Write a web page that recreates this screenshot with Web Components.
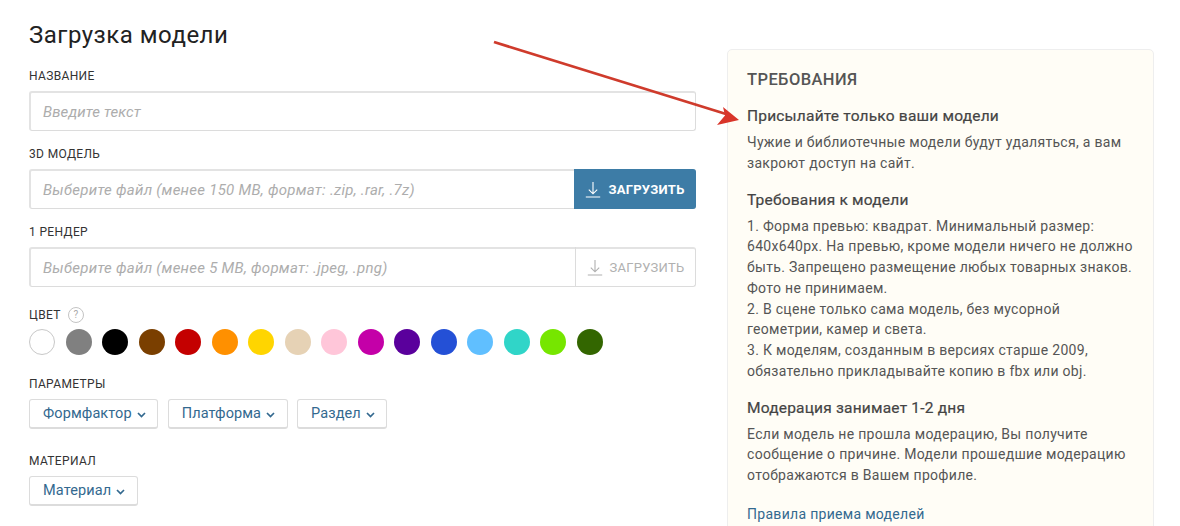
<!DOCTYPE html>
<html lang="ru">
<head>
<meta charset="utf-8">
<style>
html,body{margin:0;padding:0;height:526px;overflow:hidden;background:#fff;font-family:Roboto,"Liberation Sans",sans-serif}
</style>
</head>
<body>
<upload-page>
  <upload-form slot="left"></upload-form>
  <req-panel slot="right"></req-panel>
</upload-page>
<script>
const downIcon = `<svg width="16" height="17" viewBox="0 0 16 17" fill="none" stroke="currentColor" stroke-width="1.1"><path d="M8 1v11.5M3.8 8.6 8 12.8l4.2-4.2M.8 16h14.4"/></svg>`

class UploadPage extends HTMLElement {
  constructor() {
    super()
    this.attachShadow({ mode: 'open' })
    this.shadowRoot.innerHTML = `
    <style>
    :host {display:flex;position:relative;height:526px;overflow:hidden;padding:0 26px 0 29px;box-sizing:border-box;gap:31px}
    .l {display:block;width:667px;flex:none}
    .r {display:block;width:427px;flex:none;padding-top:49px}
    svg {position:absolute;left:0;top:0;pointer-events:none}
    </style>
    <div class="l"><slot name="left"></slot></div>
    <div class="r"><slot name="right"></slot></div>
    <svg width="1180" height="526"><path d="M494 42 726 114" stroke="#cf3b2c" stroke-width="2.800" fill="none"/><path d="M739 120 717 125 725 115.500 723 107Z" fill="#d9352a"/></svg>
    `
  }
}

class FormField extends HTMLElement {
  constructor() {
    super()
    this.attachShadow({ mode: 'open' })
    this.shadowRoot.innerHTML = `
    <style>
    :host {display:block}
    .lbl {display:flex;align-items:center;gap:7px;height:16px;font-size:12px;line-height:16px;letter-spacing:.35px;color:#333;text-transform:uppercase}
    </style>
    <div class="lbl"><span>${this.getAttribute('label')}</span><slot name="hint"></slot></div>
    <slot></slot>
    `
  }
}

class FileInput extends HTMLElement {
  constructor() {
    super()
    this.attachShadow({ mode: 'open' })
    const button = this.hasAttribute('button')
    const active = this.hasAttribute('active')
    this.shadowRoot.innerHTML = `
    <style>
    :host {display:flex;height:40px;box-sizing:border-box;border:1px solid #dcdcdc;border-top:2px solid #e3e3e3;border-left:2px solid #e3e3e3;border-radius:3px;background:#fff;position:relative}
    .txt {flex:1;padding-left:12px;font-size:15px;line-height:39px;font-style:italic;color:#adadad;white-space:nowrap;letter-spacing:.1px}
    :host([button]) .txt {letter-spacing:.27px}
    .btn {display:flex;align-items:center;justify-content:center;gap:7px;width:119px;box-sizing:border-box;margin:-2px -1px -1px 0;font-size:13px;letter-spacing:.25px}
    .btn.off {border-left:1px solid #dcdcdc;color:#b0b0b0;width:120px;margin:-2px 0 -1px 0}
    .btn.on {background:#3d7ca6;color:#fff;font-weight:700;border-radius:0 3px 3px 0;width:122px}
    </style>
    <div class="txt">${this.getAttribute('placeholder')}</div>
    ${button ? `<div class="btn ${active ? 'on' : 'off'}">${downIcon}<span>ЗАГРУЗИТЬ</span></div>` : ''}
    `
  }
}

class ColorPicker extends HTMLElement {
  constructor() {
    super()
    this.attachShadow({ mode: 'open' })
    const colors = ['#fff','#808080','#000','#7a3f00','#c40000','#ff9000','#ffd500','#e6d2b5','#ffc6d9','#c400a8','#5a009c','#2450d6','#60bfff','#30d5c8','#76e600','#336600']
    this.shadowRoot.innerHTML = `
    <style>
    :host {display:flex;gap:10.500px;margin-top:6px}
    i {display:block;width:26px;height:26px;border-radius:50%;box-sizing:border-box}
    i.w {border:1px solid #c8c8c8}
    </style>
    ${colors.map((c, i) => `<i class="${i == 0 ? 'w' : ''}" style="background:${c}"></i>`).join('')}
    `
  }
}

class DropButton extends HTMLElement {
  constructor() {
    super()
    this.attachShadow({ mode: 'open' })
    this.shadowRoot.innerHTML = `
    <style>
    :host {display:inline-flex;align-items:center;gap:5px;height:30px;box-sizing:border-box;padding:0 11.500px 0 13px;border:1px solid #dcdcdc;border-bottom-width:2px;border-radius:3px;background:#fff;color:#33698f;font-size:14.500px;letter-spacing:.1px}
    svg {margin-top:2px}
    </style>
    <slot></slot>
    <svg width="9" height="6" viewBox="0 0 9 6" fill="none" stroke="#33698f" stroke-width="1.700"><path d="M1 1 4.500 4.500 8 1"/></svg>
    `
  }
}

class UploadForm extends HTMLElement {
  constructor() {
    super()
    this.attachShadow({ mode: 'open' })
    this.shadowRoot.innerHTML = `
    <style>
    :host {display:block}
    h1 {margin:0;padding-top:20px;font-size:24px;line-height:30px;font-weight:400;color:#222;letter-spacing:.5px;height:48px}
    form-field {margin-bottom:15px}
    .row {display:flex;gap:9.500px;margin-top:7px}
    form-field.p {margin-bottom:24px}
    form-field.t {margin-bottom:20px}
    file-input {margin-top:7px}
    .q {display:block;width:14px;height:14px;border:1px solid #c4c4c4;border-radius:50%;font-size:10px;line-height:14px;text-align:center;color:#aaa;letter-spacing:0;box-sizing:content-box}
    form-field.c {margin-bottom:21px}
    </style>
    <h1>Загрузка модели</h1>
    <form-field label="Название"><file-input placeholder="Введите текст"></file-input></form-field>
    <form-field label="3D модель"><file-input placeholder="Выберите файл (менее 150 MB, формат: .zip, .rar, .7z)" button active></file-input></form-field>
    <form-field label="1 рендер" class="t"><file-input placeholder="Выберите файл (менее 5 MB, формат: .jpeg, .png)" button></file-input></form-field>
    <form-field label="Цвет" class="c"><span class="q" slot="hint">?</span><color-picker></color-picker></form-field>
    <form-field label="Параметры" class="p"><div class="row"><drop-button>Формфактор</drop-button><drop-button>Платформа</drop-button><drop-button>Раздел</drop-button></div></form-field>
    <form-field label="Материал"><div class="row"><drop-button>Материал</drop-button></div></form-field>
    `
  }
}

class ReqPanel extends HTMLElement {
  constructor() {
    super()
    this.attachShadow({ mode: 'open' })
    this.shadowRoot.innerHTML = `
    <style>
    :host {display:block;box-sizing:border-box;height:520px;padding:19px 19px 0 19px;border:1px solid #eee;border-radius:5px;background:#fffdf6;color:#555}
    h2 {margin:0 0 14px;font-size:16.500px;line-height:22px;font-weight:500;color:#555;letter-spacing:.4px}
    h3 {margin:0 0 5px;font-size:15.500px;line-height:22px;font-weight:400;color:#444;letter-spacing:.2px;-webkit-text-stroke:.2px #444}
    p {margin:0 0 15px;font-size:14px;line-height:20.750px;letter-spacing:.3px}
    a {display:block;margin-top:18px;font-size:14px;line-height:21px;color:#33698f;letter-spacing:.3px}
    </style>
    <h2>ТРЕБОВАНИЯ</h2>
    <h3>Присылайте только ваши модели</h3>
    <p>Чужие и библиотечные модели будут удаляться, а вам<br>закроют доступ на сайт.</p>
    <h3>Требования к модели</h3>
    <p>1. Форма превью: квадрат. Минимальный размер:<br>640x640px. На превью, кроме модели ничего не должно<br>быть. Запрещено размещение любых товарных знаков.<br>Фото не принимаем.<br>2. В сцене только сама модель, без мусорной<br>геометрии, камер и света.<br>3. К моделям, созданным в версиях старше 2009,<br>обязательно прикладывайте копию в fbx или obj.</p>
    <h3>Модерация занимает 1-2 дня</h3>
    <p>Если модель не прошла модерацию, Вы получите<br>сообщение о причине. Модели прошедшие модерацию<br>отображаются в Вашем профиле.</p>
    <a>Правила приема моделей</a>
    `
  }
}

customElements.define('form-field', FormField)
customElements.define('file-input', FileInput)
customElements.define('color-picker', ColorPicker)
customElements.define('drop-button', DropButton)
customElements.define('upload-form', UploadForm)
customElements.define('req-panel', ReqPanel)
customElements.define('upload-page', UploadPage)
</script>
</body>
</html>
